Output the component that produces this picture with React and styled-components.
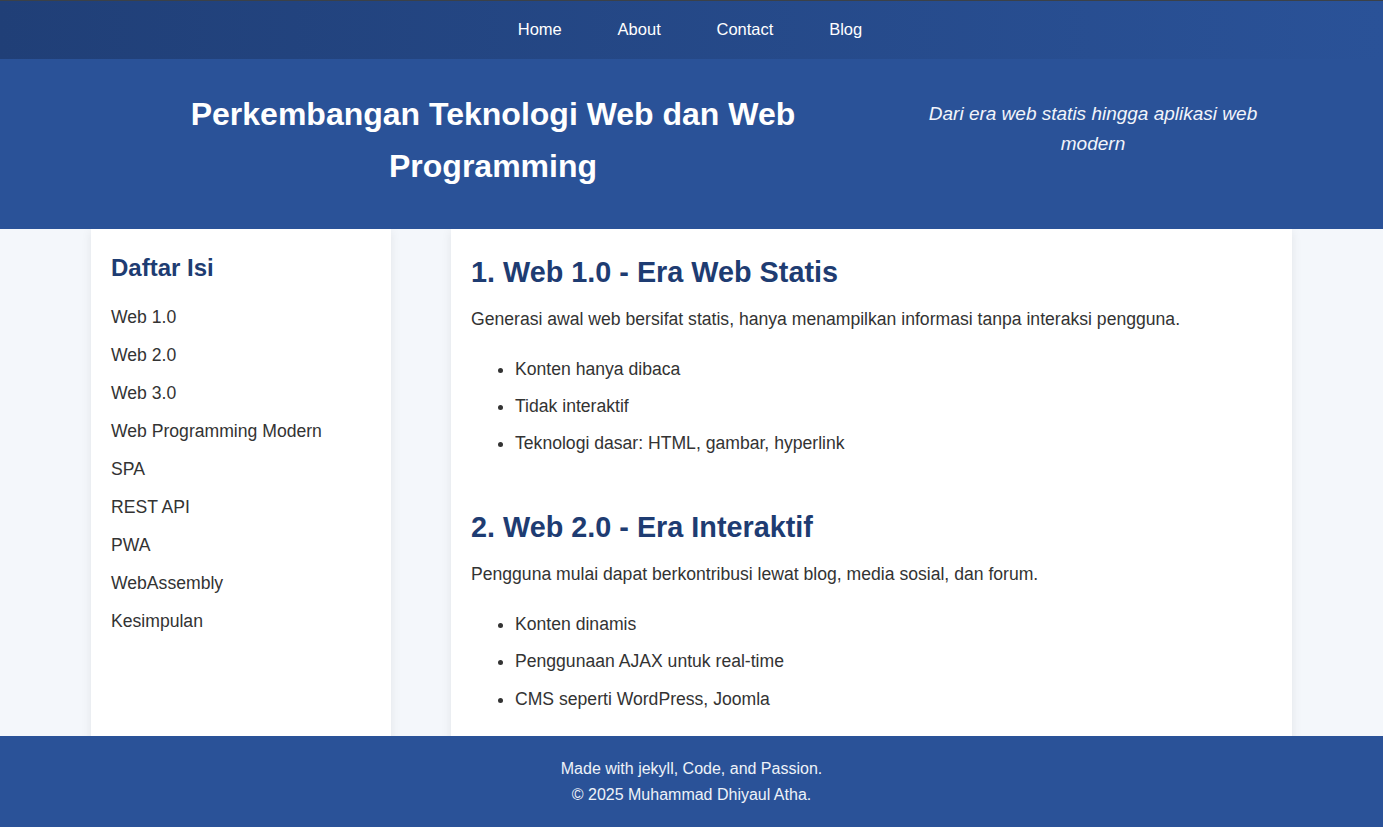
import React from "react";
import styled, { createGlobalStyle } from "styled-components";

const GlobalStyle = createGlobalStyle`
  html, body {
    margin: 0;
    padding: 0;
    height: 100%;
    overflow: hidden;
  }
  body {
    font-family: "Liberation Sans", Arial, sans-serif;
    line-height: 1.6;
    color: #333;
    background: #f4f7fb;
  }
  #root {
    height: 100%;
  }
`;

const tocItems = [
  "Web 1.0",
  "Web 2.0",
  "Web 3.0",
  "Web Programming Modern",
  "SPA",
  "REST API",
  "PWA",
  "WebAssembly",
  "Kesimpulan",
];

const sections = [
  {
    title: "1. Web 1.0 - Era Web Statis",
    text: "Generasi awal web bersifat statis, hanya menampilkan informasi tanpa interaksi pengguna.",
    points: ["Konten hanya dibaca", "Tidak interaktif", "Teknologi dasar: HTML, gambar, hyperlink"],
  },
  {
    title: "2. Web 2.0 - Era Interaktif",
    text: "Pengguna mulai dapat berkontribusi lewat blog, media sosial, dan forum.",
    points: ["Konten dinamis", "Penggunaan AJAX untuk real-time", "CMS seperti WordPress, Joomla"],
  },
];

const App = () => {
  return (
    <Page>
      <GlobalStyle />
      <NavBar>
        <NavList>
          {["Home", "About", "Contact", "Blog"].map((item) => (
            <NavLink key={item} href="#">
              {item}
            </NavLink>
          ))}
        </NavList>
      </NavBar>
      <Hero>
        <HeroInner>
          <HeroTitle>Perkembangan Teknologi Web dan Web Programming</HeroTitle>
          <HeroSubtitle>Dari era web statis hingga aplikasi web modern</HeroSubtitle>
        </HeroInner>
      </Hero>
      <Main>
        <Container>
          <Sidebar>
            <SidebarTitle>Daftar Isi</SidebarTitle>
            <TocList>
              {tocItems.map((item) => (
                <TocItem key={item}>
                  <TocLink href="#">{item}</TocLink>
                </TocItem>
              ))}
            </TocList>
          </Sidebar>
          <Content>
            {sections.map((s) => (
              <Section key={s.title}>
                <SectionTitle>{s.title}</SectionTitle>
                <Paragraph>{s.text}</Paragraph>
                <Points>
                  {s.points.map((p) => (
                    <Point key={p}>{p}</Point>
                  ))}
                </Points>
              </Section>
            ))}
          </Content>
        </Container>
      </Main>
      <Footer>
        <FooterLine>Made with jekyll, Code, and Passion.</FooterLine>
        <FooterLine>© 2025 Muhammad Dhiyaul Atha.</FooterLine>
      </Footer>
    </Page>
  );
};

export default App;

const Page = styled.div`
  display: flex;
  flex-direction: column;
  height: 100vh;
`;

const NavBar = styled.nav`
  flex: none;
  box-sizing: border-box;
  height: 59px;
  padding: 0 3px 2px 0;
  border-top: 1px solid #3b4148;
  background: linear-gradient(to right, #203f77, #2a5298);
  display: flex;
  align-items: center;
  justify-content: center;
`;

const NavList = styled.div`
  display: flex;
  gap: 55.8px;
`;

const NavLink = styled.a`
  color: #fff;
  text-decoration: none;
  font-size: 16.5px;
`;

const Hero = styled.header`
  flex: none;
  height: 170px;
  background: #2a5298;
  color: #fff;
`;

const HeroInner = styled.div`
  width: 1201px;
  margin: 0 auto;
  display: flex;
  align-items: flex-start;
  padding-top: 29px;
`;

const HeroTitle = styled.h1`
  flex: 0 0 800px;
  box-sizing: border-box;
  margin: 0;
  padding-left: 4px;
  font-size: 32px;
  line-height: 52px;
  text-align: center;
  font-weight: bold;
`;

const HeroSubtitle = styled.p`
  flex: 0 0 400px;
  box-sizing: border-box;
  margin: 11px 0 0;
  padding: 0 17px 0 21px;
  font-size: 19px;
  line-height: 30px;
  font-style: italic;
  text-align: center;
  color: #f2f5fb;
`;

const Main = styled.main`
  flex: 1;
  min-height: 0;
  overflow: hidden;
`;

const Container = styled.div`
  width: 1201px;
  margin: 0 auto;
  display: flex;
  gap: 60px;
  align-items: stretch;
  min-height: 100%;
`;

const Sidebar = styled.aside`
  flex: none;
  width: 300px;
  box-sizing: border-box;
  padding: 20px;
  background: #fff;
  box-shadow: 0 2px 10px rgba(0, 0, 0, 0.08);
`;

const SidebarTitle = styled.h3`
  margin: 0 0 16.4px;
  font-size: 24px;
  line-height: 38px;
  color: #1e3c72;
`;

const TocList = styled.ul`
  list-style: none;
  margin: 0;
  padding: 0;
`;

const TocItem = styled.li`
  margin-bottom: 10px;
  font-size: 17.6px;
  line-height: 28px;
`;

const TocLink = styled.a`
  color: #333;
  text-decoration: none;
`;

const Content = styled.article`
  flex: 1;
  box-sizing: border-box;
  padding: 20px;
  background: #fff;
  box-shadow: 0 2px 10px rgba(0, 0, 0, 0.08);
`;

const Section = styled.section`
  margin-bottom: 47px;
`;

const SectionTitle = styled.h2`
  margin: 0 0 10px;
  font-size: 28.8px;
  line-height: 46px;
  color: #1e3c72;
`;

const Paragraph = styled.p`
  margin: 0;
  font-size: 17.6px;
  line-height: 28px;
`;

const Points = styled.ul`
  margin: 21.6px 0 0;
  padding-left: 44px;
`;

const Point = styled.li`
  font-size: 17.6px;
  line-height: 28px;
  margin-bottom: 9.4px;
  &:last-child {
    margin-bottom: 0;
  }
`;

const Footer = styled.footer`
  flex: none;
  height: 91px;
  box-sizing: border-box;
  padding-top: 20px;
  background: #2a5298;
  color: #eef2f9;
  text-align: center;
`;

const FooterLine = styled.p`
  margin: 0;
  font-size: 16px;
  line-height: 26px;
`;
